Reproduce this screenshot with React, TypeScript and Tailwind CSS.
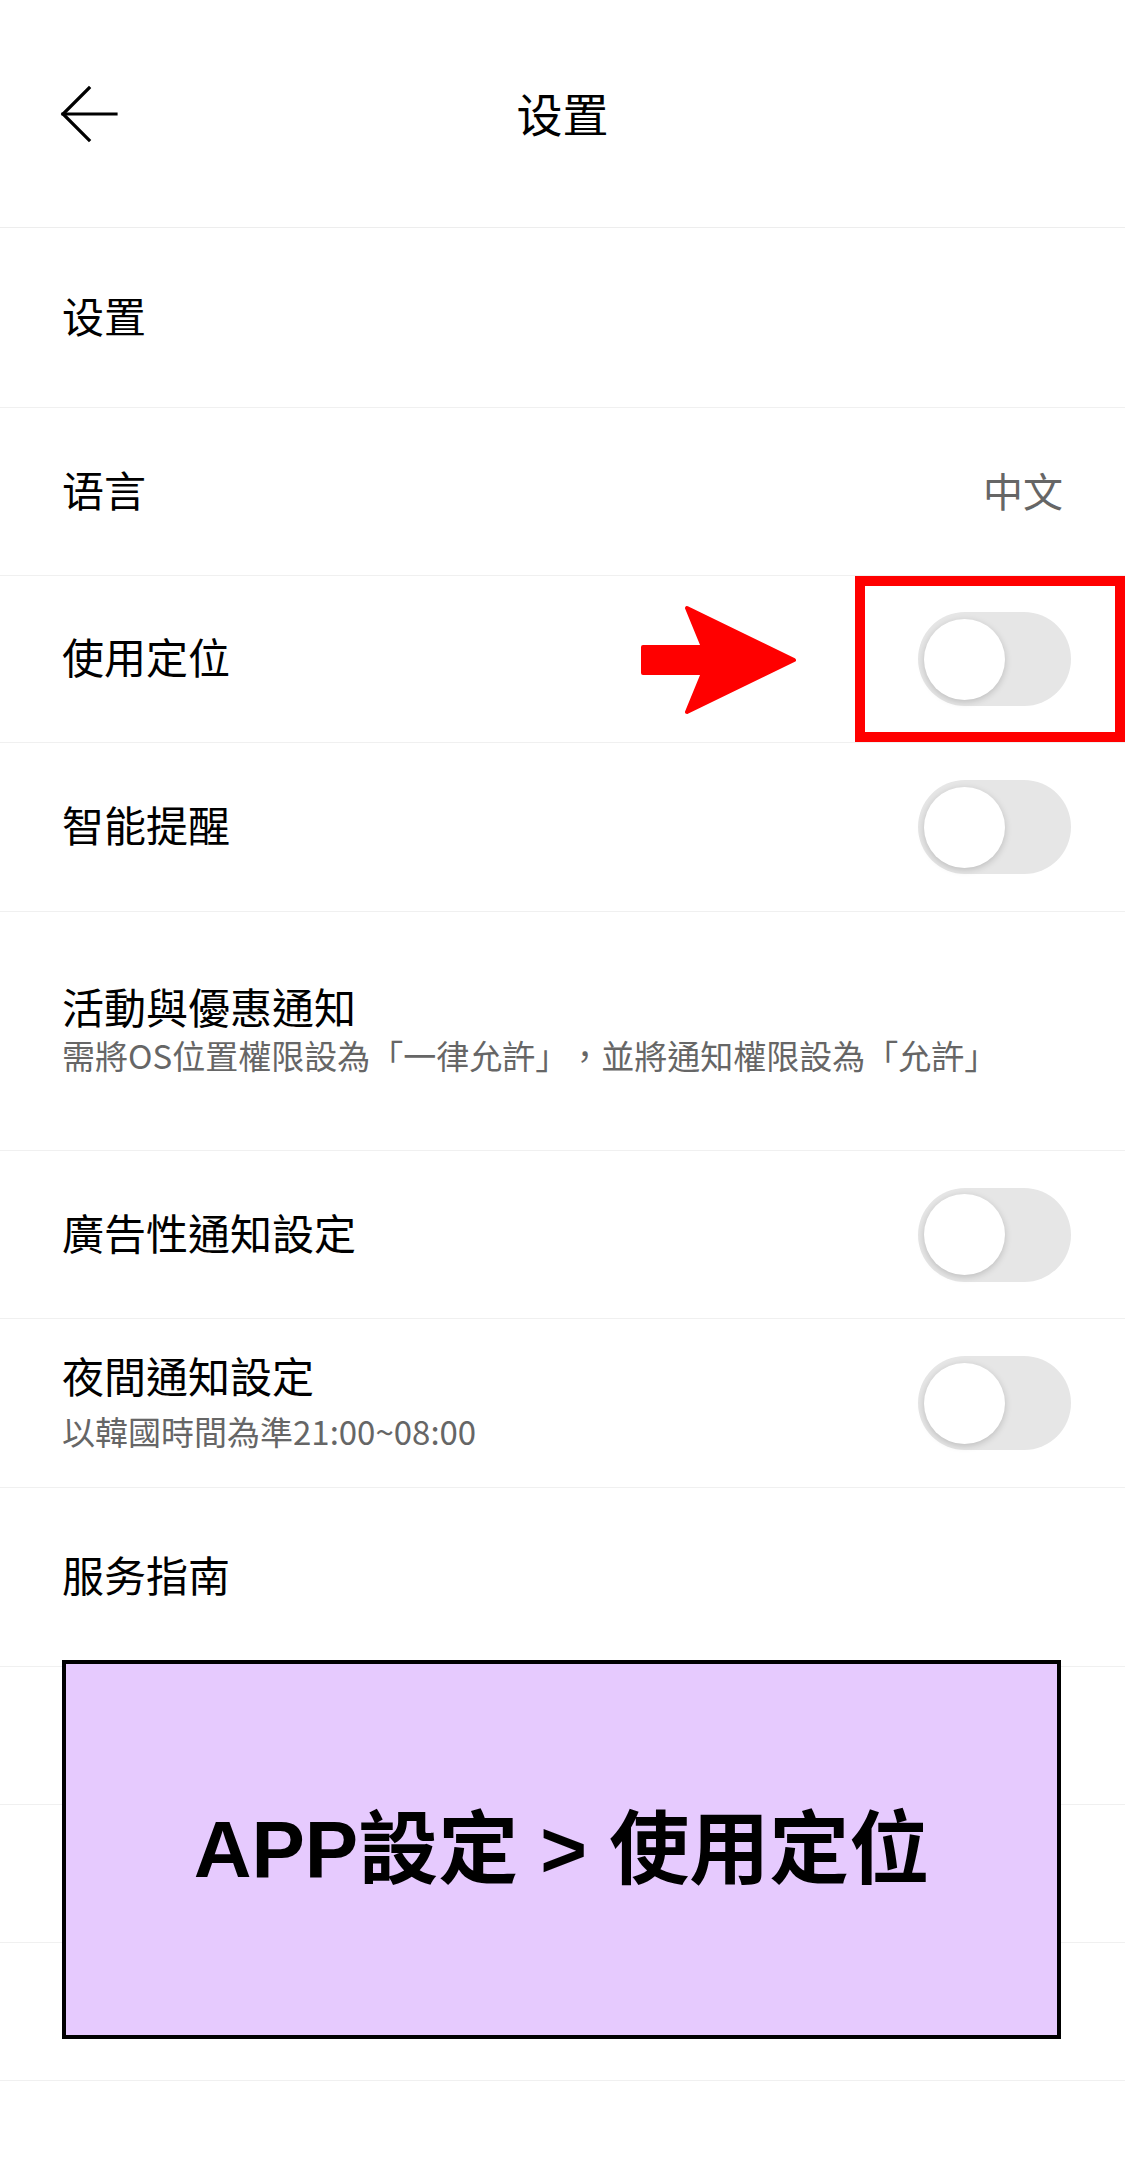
import React from 'react';

const CJK_SC = '"Noto Sans CJK SC", "Noto Sans CJK TC", sans-serif';
const CJK_TC = '"Noto Sans CJK TC", "Noto Sans CJK SC", sans-serif';

function Toggle() {
  return (
    <div className="w-[153px] h-[94px] rounded-full bg-[#e6e6e6] flex items-center pl-[6px] shrink-0">
      <div className="w-[81px] h-[81px] rounded-full bg-white shadow-[0_2px_7px_rgba(0,0,0,0.18)]" />
    </div>
  );
}

interface Row {
  label: string;
  sub?: string;
  subGap?: string;
  value?: string;
  toggle?: boolean;
  tc?: boolean;
  h: string;
}

const rows: Row[] = [
  { label: '设置', h: 'h-[180px]' },
  { label: '语言', value: '中文', h: 'h-[168px]' },
  { label: '使用定位', toggle: true, h: 'h-[167px]' },
  { label: '智能提醒', toggle: true, h: 'h-[169px]' },
  {
    label: '活動與優惠通知',
    sub: '需將OS位置權限設為「一律允許」，並將通知權限設為「允許」',
    subGap: 'mt-[4px]',
    tc: true,
    h: 'h-[239px]',
  },
  { label: '廣告性通知設定', toggle: true, tc: true, h: 'h-[168px]' },
  { label: '夜間通知設定', sub: '以韓國時間為準21:00~08:00', subGap: 'mt-[11px]', toggle: true, tc: true, h: 'h-[169px]' },
  { label: '服务指南', h: 'h-[179px]' },
  { label: '', h: 'h-[138px]' },
  { label: '', h: 'h-[138px]' },
  { label: '', h: 'h-[138px]' },
];

export default function App() {
  return (
    <div
      className="relative w-[1125px] min-h-[2184px] bg-white text-black [text-spacing-trim:space-all]"
      style={{ fontFamily: CJK_SC }}
    >
      {/* header */}
      <div className="h-[228px] grid grid-cols-[1fr_auto_1fr] items-center px-[60px] border-b border-[#ededed]">
        <svg width="60" height="58" viewBox="0 0 60 58" fill="none" stroke="black" strokeWidth="3.2" strokeLinecap="square">
          <path d="M3 29H56" />
          <path d="M29 3L3 29L29 55" />
        </svg>
        <h1 className="text-[46px] leading-none font-normal -mt-[4px]">设置</h1>
        <div />
      </div>

      {rows.map((row, i) => (
        <div
          key={i}
          className={`relative flex items-center justify-between px-[62px] border-b border-[#f0f0f0] ${row.h}`}
          style={{ fontFamily: row.tc ? CJK_TC : CJK_SC }}
        >
          <div className="flex flex-col mb-[6px]">
            <span className="text-[42px] leading-[50px]">{row.label}</span>
            {row.sub && <span className={`text-[33px] leading-[40px] text-[#666] ${row.subGap}`}>{row.sub}</span>}
          </div>
          {row.value && <span className="text-[40px] leading-none text-[#666] mb-[4px]">{row.value}</span>}
          {row.toggle && <div className="mr-[-8px]"><Toggle /></div>}

          {row.label === '使用定位' && (
            <>
              <svg className="absolute left-[640px] top-[28px]" width="158" height="112" viewBox="0 0 158 112">
                <path
                  d="M47 4L63 43H3V69H63L47 108L154 56Z"
                  fill="#ff0000"
                  stroke="#ff0000"
                  strokeWidth="4"
                  strokeLinejoin="round"
                />
              </svg>
              <div className="absolute right-0 top-0 h-full w-[270px] border-[10px] border-[#ff0000]" />
            </>
          )}
        </div>
      ))}

      {/* annotation box */}
      <div className="absolute left-[62px] top-[1660px] w-[999px] h-[379px] border-[4px] border-black bg-[#e6cafe] flex items-center justify-center">
        <span
          className="text-[80px] font-bold leading-none"
          style={{ fontFamily: '"Liberation Sans", "Noto Sans CJK TC", sans-serif' }}
        >
          APP設定 &gt; 使用定位
        </span>
      </div>
    </div>
  );
}
